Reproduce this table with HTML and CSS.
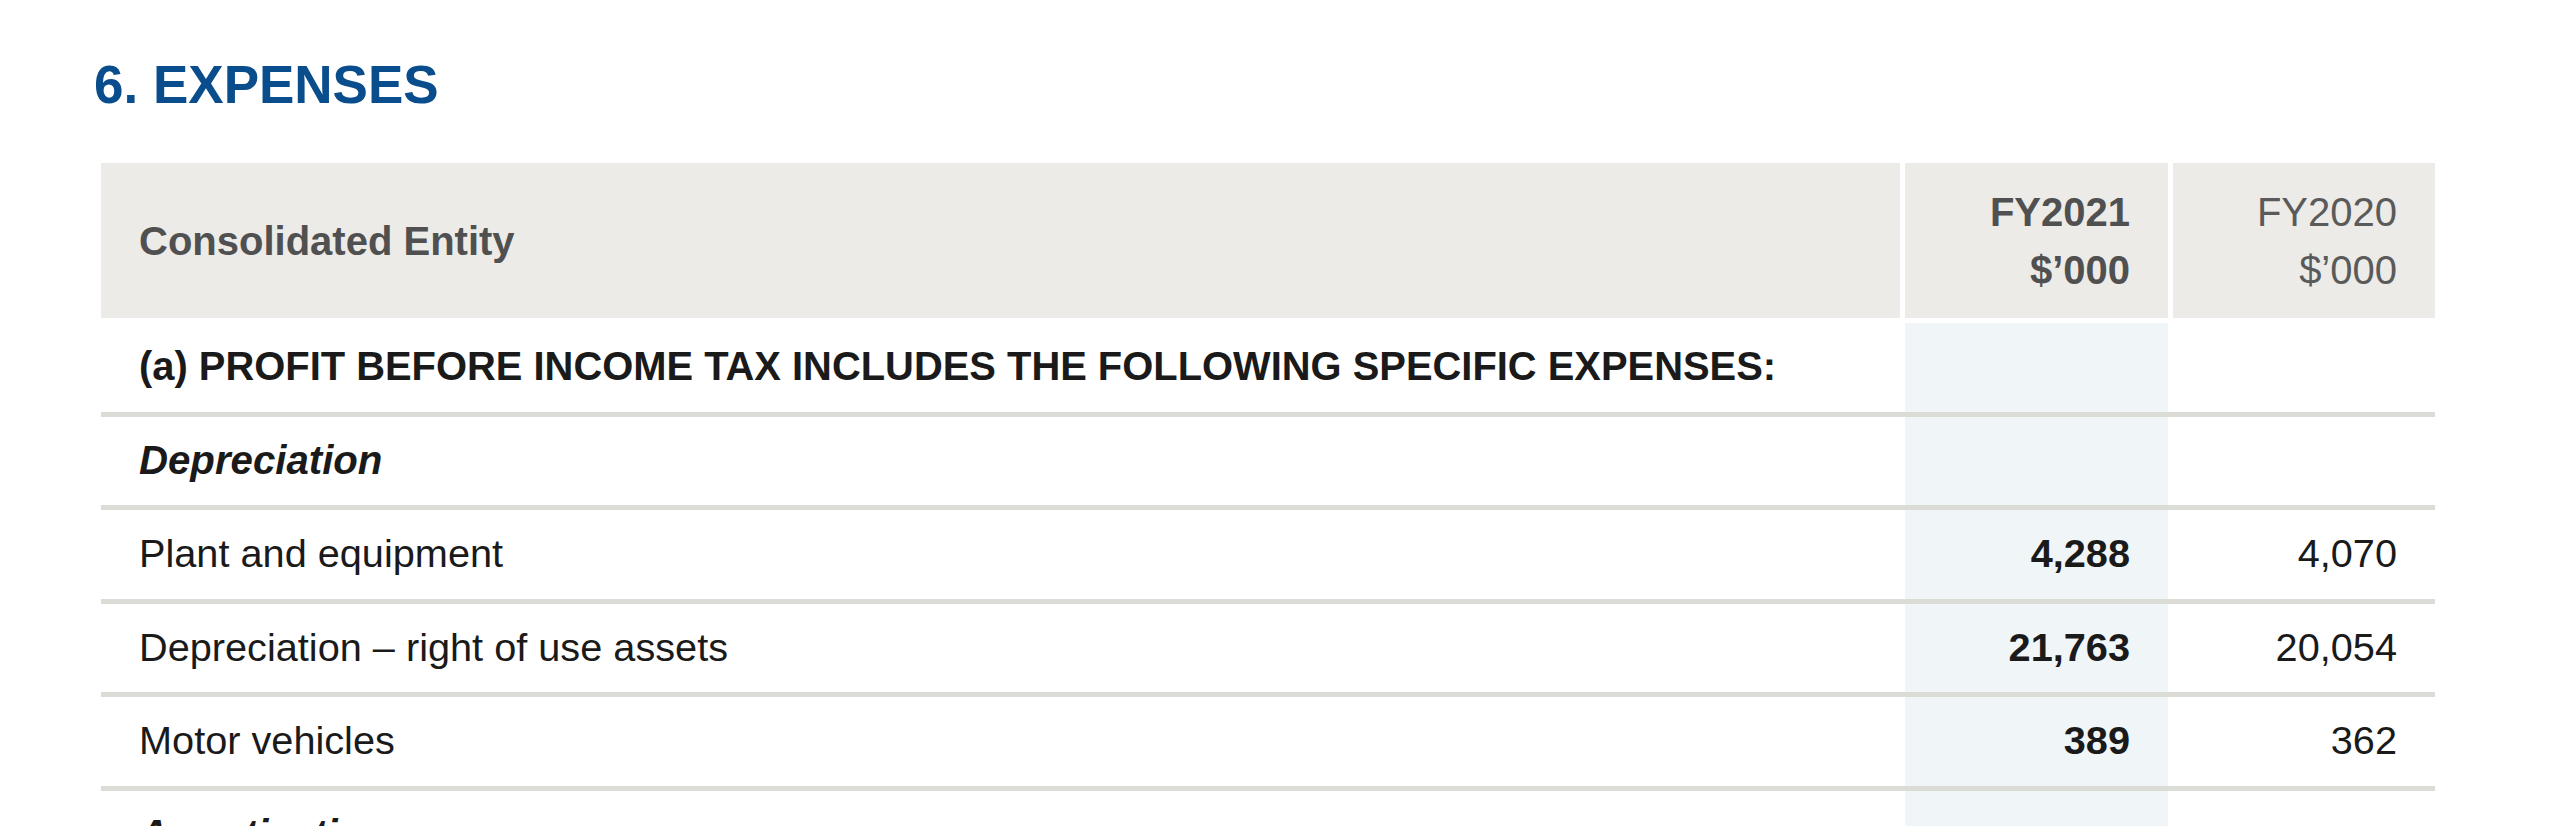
FILE: index.html
```html
<!DOCTYPE html>
<html lang="en">
<head>
<meta charset="utf-8">
<title>6. Expenses</title>
<link rel="stylesheet" href="styles.css">
</head>
<body>
<main class="page">
  <h1 class="title">6. EXPENSES</h1>
  <div class="fin-table">
    <div class="row row-head">
      <div class="cell label">Consolidated Entity</div>
      <div class="cell num current">FY2021<br>$’000</div>
      <div class="cell num prior">FY2020<br>$’000</div>
    </div>
    <div class="row">
      <div class="cell label heading">(a) PROFIT BEFORE INCOME TAX INCLUDES THE FOLLOWING SPECIFIC EXPENSES:</div>
      <div class="cell num current"></div>
      <div class="cell num prior"></div>
    </div>
    <div class="row">
      <div class="cell label subheading">Depreciation</div>
      <div class="cell num current"></div>
      <div class="cell num prior"></div>
    </div>
    <div class="row">
      <div class="cell label">Plant and equipment</div>
      <div class="cell num current">4,288</div>
      <div class="cell num prior">4,070</div>
    </div>
    <div class="row">
      <div class="cell label">Depreciation – right of use assets</div>
      <div class="cell num current">21,763</div>
      <div class="cell num prior">20,054</div>
    </div>
    <div class="row">
      <div class="cell label">Motor vehicles</div>
      <div class="cell num current">389</div>
      <div class="cell num prior">362</div>
    </div>
    <div class="row">
      <div class="cell label subheading">Amortisation</div>
      <div class="cell num current"></div>
      <div class="cell num prior"></div>
    </div>
  </div>
</main>
</body>
</html>
```

FILE: styles.css
```css
html,
body {
  margin: 0;
  padding: 0;
  background: #ffffff;
  overflow: hidden;
}

.page {
  padding: 58px 125px 0 101px;
  font-family: "Liberation Sans", Arial, Helvetica, sans-serif;
}

.title {
  margin: 0 0 52px -7px;
  font-size: 53px;
  line-height: 53px;
  font-weight: 700;
  color: #0a4d8c;
}

.fin-table {
  display: flex;
  flex-direction: column;
}

.row {
  display: grid;
  grid-template-columns: 1fr 263px 262px;
  column-gap: 5px;
  height: 93.5px;
  box-sizing: border-box;
  border-bottom: 5px solid #dcdcd6;
}

.cell {
  display: flex;
  align-items: center;
  padding: 0 38px;
  font-size: 39.7px;
  line-height: 1.15;
  color: #1a1a1a;
  white-space: nowrap;
}

.num {
  justify-content: flex-end;
  text-align: right;
}

.current {
  background: #f0f5f8;
  font-weight: 700;
}

.heading {
  font-weight: 700;
  font-size: 39.9px;
}

.subheading {
  font-weight: 700;
  font-style: italic;
  font-size: 40.2px;
}

.row-head {
  height: 155px;
  border-bottom: 0;
  margin-bottom: 5px;
}

.row-head .cell {
  background: #ecebe8;
  color: #505050;
  font-size: 40px;
  line-height: 57.6px;
  padding-top: 3px;
}

.row-head .label {
  font-weight: 700;
}

.row-head .current {
  font-weight: 700;
}

.row-head .prior {
  font-weight: 400;
  color: #5a5a5a;
}
```
